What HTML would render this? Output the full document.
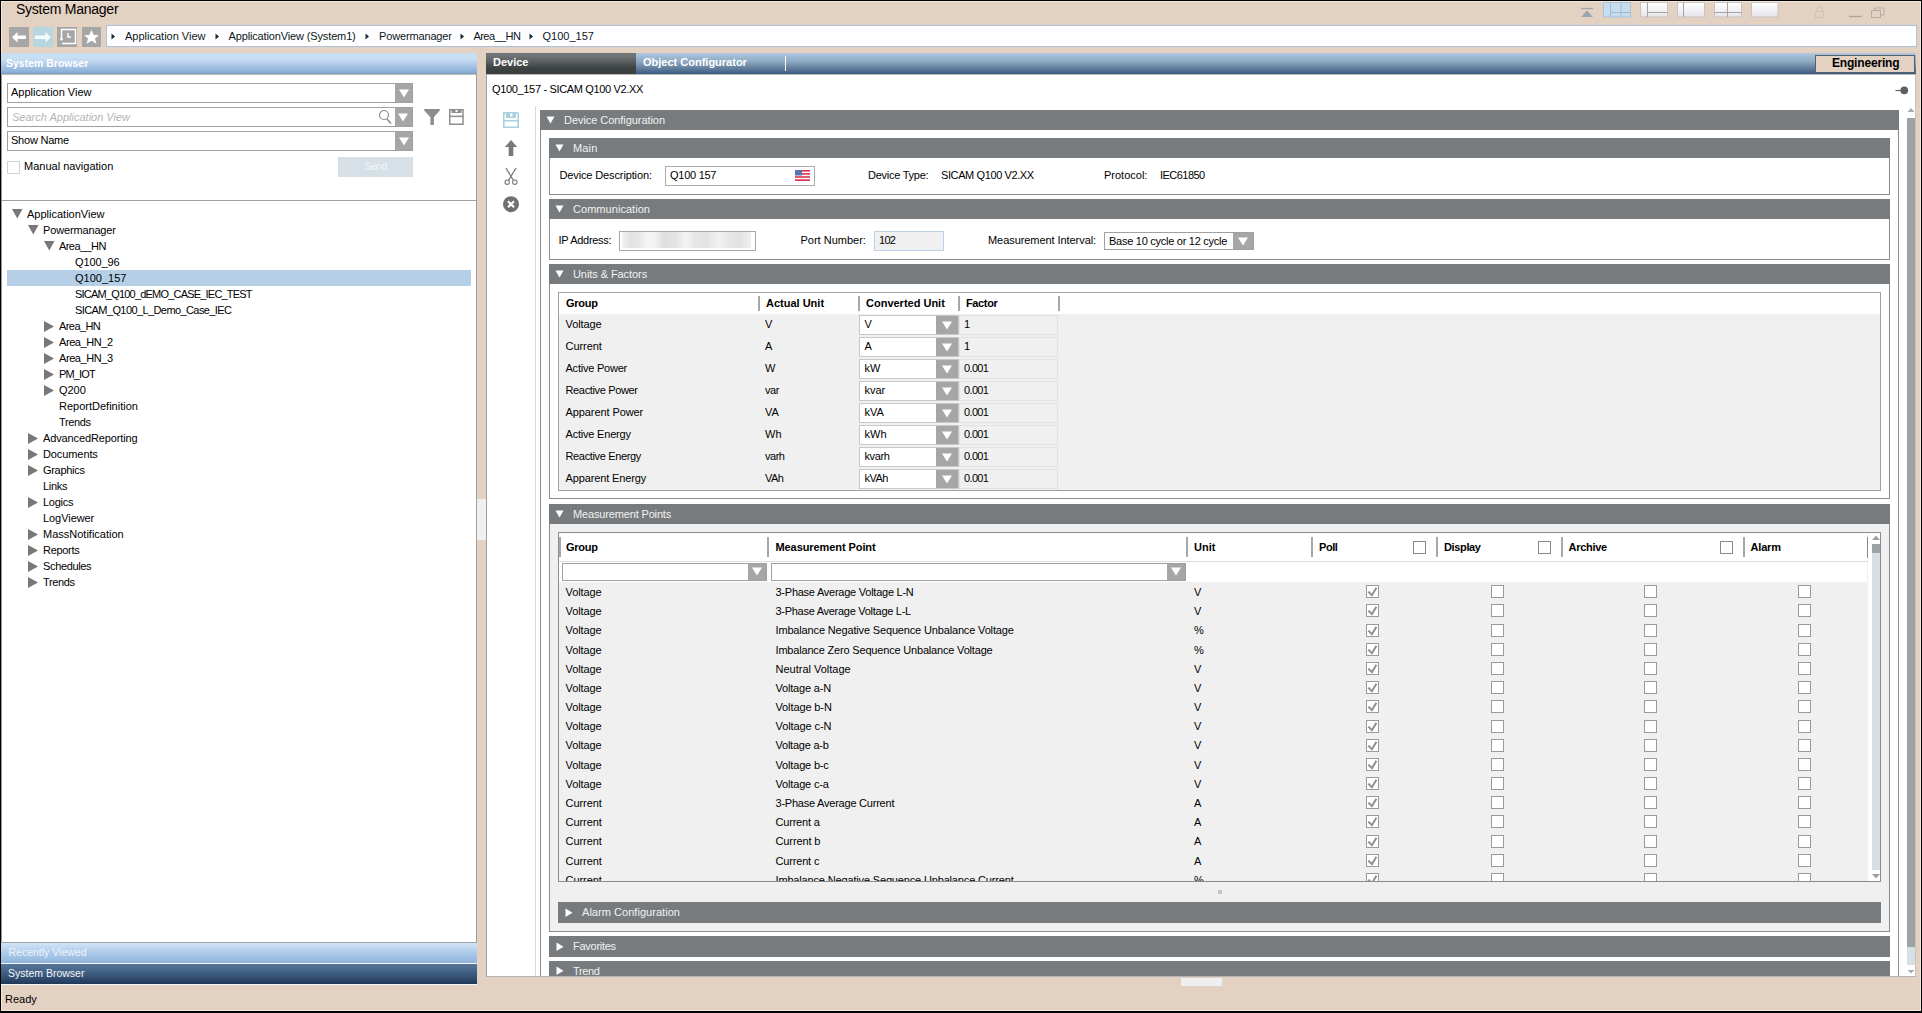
<!DOCTYPE html>
<html><head><meta charset="utf-8"><style>
html,body{margin:0;padding:0;width:1922px;height:1013px;overflow:hidden;background:#000}
body{position:relative;font-family:"Liberation Sans",sans-serif}
div{position:absolute}
.t{white-space:nowrap;line-height:20px}
</style></head><body>
<div style="left:0px;top:0px;width:1922px;height:1013px;background:#000"></div>
<div style="left:1px;top:1px;width:1920px;height:1010px;background:#f3e7db"></div>
<div style="left:2px;top:2px;width:1918px;height:1008px;background:#e3d1c1"></div>
<div class="t" style="left:16px;top:-1px;font-size:14px;letter-spacing:-0.252px;color:#000">System Manager</div>
<svg style="position:absolute;left:1578px;top:0px" width="320" height="22">
<defs><linearGradient id="wg" x1="0" y1="0" x2="0" y2="1"><stop offset="0" stop-color="#ffffff"/><stop offset="1" stop-color="#e6e4e8"/></linearGradient></defs>
<g fill="none">
<path d="M3 8.5h12" stroke="#9aa6ae" stroke-width="1.3"/>
<path d="M3 17 L9 10.5 L15 17 Z" fill="#9aa6ae"/>
<rect x="25.5" y="2.5" width="27" height="14.5" fill="#c6ddf0" stroke="#abc4da"/>
<path d="M32.5 2.5v14.5M43 2.5v14.5M32.5 12.5h20" stroke="#a2b9ce"/>
<rect x="62.5" y="2.5" width="27" height="14.5" fill="url(#wg)" stroke="#c9c3c3"/>
<path d="M69.5 2.5v14.5M69.5 12.5h20" stroke="#a9a3a3"/>
<rect x="99.5" y="2.5" width="27" height="14.5" fill="url(#wg)" stroke="#c9c3c3"/>
<path d="M105.5 2.5v14.5" stroke="#a9a3a3"/>
<rect x="136.5" y="2.5" width="27" height="14.5" fill="url(#wg)" stroke="#c9c3c3"/>
<path d="M149.5 2.5v14.5M136.5 12.5h27" stroke="#a9a3a3"/>
<rect x="173.5" y="2.5" width="26.5" height="14.5" fill="url(#wg)" stroke="#c9c3c3"/>
<rect x="237.5" y="11.5" width="8" height="6" fill="none" stroke="#d2c2b5"/>
<path d="M239 11.5v-2.5a2.5 2.5 0 0 1 5 0v2.5" stroke="#d2c2b5"/>
<path d="M271 16.5h13" stroke="#aba5a2" stroke-width="1.3"/>
<rect x="293.5" y="10.5" width="9" height="7" stroke="#b5aca7"/>
<path d="M296.5 10.5v-2.5h9.5v7h-3" stroke="#b5aca7"/>
</g></svg>
<div style="left:9px;top:27px;width:20px;height:20px;background:#a6a6a6"></div>
<div style="left:33px;top:27px;width:20px;height:20px;background:#b7d6e0"></div>
<div style="left:57px;top:27px;width:20px;height:20px;background:#a6a6a6"></div>
<div style="left:82px;top:27px;width:19px;height:20px;background:#a6a6a6"></div>
<svg style="position:absolute;left:9px;top:27px" width="100" height="20">
<path d="M3 10.3 L8.5 5 V8.6 H17 V12 H8.5 V15.6 Z" fill="#fff"/>
<path d="M42 10.3 L36.5 5 V8.6 H26 V12 H36.5 V15.6 Z" fill="#f4fbfd"/>
<path d="M52.5 13 V2.5 H66.5 V16.5 H53" fill="none" stroke="#fff" stroke-width="1.5"/>
<path d="M50.5 11.5 L52.5 14 L54.5 11.5" fill="#fff"/>
<path d="M59 6 V10 H62" fill="none" stroke="#fff" stroke-width="1.5"/>
<path d="M82.5 3 L84.8 8 L90 8.3 L86 11.6 L87.4 16.8 L82.5 13.8 L77.6 16.8 L79 11.6 L75 8.3 L80.2 8 Z" fill="#fff"/>
</svg>
<div style="left:106px;top:25px;width:1811px;height:22px;background:#fff;border:1px solid #a8c3df;box-sizing:border-box"></div>
<svg style="position:absolute;left:111px;top:33px" width="5" height="7"><path d="M0.5 0.5 L4 3.5 L0.5 6.5Z" fill="#1a2a3a"/></svg>
<svg style="position:absolute;left:215px;top:33px" width="5" height="7"><path d="M0.5 0.5 L4 3.5 L0.5 6.5Z" fill="#1a2a3a"/></svg>
<svg style="position:absolute;left:365px;top:33px" width="5" height="7"><path d="M0.5 0.5 L4 3.5 L0.5 6.5Z" fill="#1a2a3a"/></svg>
<svg style="position:absolute;left:460px;top:33px" width="5" height="7"><path d="M0.5 0.5 L4 3.5 L0.5 6.5Z" fill="#1a2a3a"/></svg>
<svg style="position:absolute;left:529px;top:33px" width="5" height="7"><path d="M0.5 0.5 L4 3.5 L0.5 6.5Z" fill="#1a2a3a"/></svg>
<div class="t" style="left:125px;top:26px;font-size:11px;color:#0c1622">Application View</div>
<div class="t" style="left:228.5px;top:26px;font-size:11px;letter-spacing:-0.140px;color:#0c1622">ApplicationView (System1)</div>
<div class="t" style="left:379px;top:26px;font-size:11px;letter-spacing:-0.148px;color:#0c1622">Powermanager</div>
<div class="t" style="left:473.5px;top:26px;font-size:11px;letter-spacing:-0.568px;color:#0c1622">Area__HN</div>
<div class="t" style="left:542.5px;top:26px;font-size:11px;color:#0c1622">Q100_157</div>
<div style="left:1px;top:53px;width:476px;height:890px;background:#fff"></div>
<div style="left:476px;top:74px;width:1px;height:869px;background:#a0a0a0"></div>
<div style="left:1px;top:75px;width:1px;height:867px;background:#999"></div>
<div style="left:477px;top:499px;width:9px;height:41px;background:#f0f0f0"></div>
<div style="left:1px;top:942px;width:476px;height:1px;background:#a0a0a0"></div>
<div style="left:1px;top:53px;width:476px;height:21px;background:linear-gradient(#c9dcee,#c7e0f4 15%,#c7dbf2 30%,#a9c7e6 60%,#8db2d9 88%,#7f9ec2)"></div>
<div style="left:1px;top:74px;width:475px;height:1px;background:#b9b9b9"></div>
<div class="t" style="left:6px;top:53px;font-size:10.5px;color:#fff;font-weight:bold">System Browser</div>
<div style="left:7px;top:83px;width:406px;height:20px;background:#fff;border:1px solid #a0a0a0;box-sizing:border-box"></div>
<div style="left:395px;top:84px;width:17px;height:18px;background:#a6a6a6"></div>
<svg style="position:absolute;left:397.5px;top:88.0px" width="12" height="10"><path d="M1 1.5 H11 L6 9.5Z" fill="#fff"/></svg>
<div class="t" style="left:11px;top:82px;font-size:11px;color:#000">Application View</div>
<div style="left:7px;top:107px;width:406px;height:20px;background:#fff;border:1px solid #a0a0a0;box-sizing:border-box"></div>
<div style="left:395px;top:108px;width:17px;height:18px;background:#a6a6a6"></div>
<svg style="position:absolute;left:397px;top:112px" width="12" height="10"><path d="M1 1.5 H11 L6 9.5Z" fill="#fff"/></svg>
<div class="t" style="left:12px;top:107px;font-size:11px;color:#b4b4b4;font-style:italic">Search Application View</div>
<svg style="position:absolute;left:377px;top:109px" width="16" height="16"><circle cx="7" cy="6" r="4.5" fill="none" stroke="#8a8a8a" stroke-width="1.2"/><path d="M9.8 9.8 L14 14.5" stroke="#8a8a8a" stroke-width="1.5"/></svg>
<svg style="position:absolute;left:424px;top:109px" width="44" height="17">
<path d="M0.2 0 H15.8 V1.6 L9.9 8.2 V16 H6.4 V8.2 L0.2 1.6 Z" fill="#8e8e8e"/>
<path d="M25.75 0.75 H39 V15.25 H25.75 Z" fill="none" stroke="#8e8e8e" stroke-width="1.5"/>
<rect x="27.5" y="0.5" width="10" height="3.5" fill="#8e8e8e"/>
<rect x="31.5" y="1" width="2" height="2" fill="#fff"/>
<rect x="25.5" y="6.6" width="14" height="1.5" fill="#8e8e8e"/>
</svg>
<div style="left:7px;top:131px;width:406px;height:20px;background:#fff;border:1px solid #a0a0a0;box-sizing:border-box"></div>
<div style="left:395px;top:132px;width:17px;height:18px;background:#a6a6a6"></div>
<svg style="position:absolute;left:397.5px;top:136.0px" width="12" height="10"><path d="M1 1.5 H11 L6 9.5Z" fill="#fff"/></svg>
<div class="t" style="left:11px;top:130px;font-size:11px;letter-spacing:-0.217px;color:#000">Show Name</div>
<div style="left:7px;top:161px;width:13px;height:13px;background:#fff;border:1px solid #d0d0d0;box-sizing:border-box"></div>
<div class="t" style="left:24px;top:156px;font-size:11px;color:#000">Manual navigation</div>
<div style="left:338px;top:157px;width:75px;height:20px;background:#d6e0e6"></div>
<div class="t" style="left:364px;top:156px;font-size:11px;letter-spacing:-0.673px;color:#f2f6f8">Send</div>
<div style="left:1px;top:200px;width:475px;height:1px;background:#a0a0a0"></div>
<div style="left:7px;top:270px;width:464px;height:16px;background:#b4cfe6"></div>
<svg style="position:absolute;left:11.5px;top:209.2px" width="11" height="10"><path d="M0 0 H10.5 L5.25 9.5Z" fill="#787878"/></svg>
<div class="t" style="left:27px;top:204px;font-size:11px;color:#000">ApplicationView</div>
<svg style="position:absolute;left:27.5px;top:225.2px" width="11" height="10"><path d="M0 0 H10.5 L5.25 9.5Z" fill="#787878"/></svg>
<div class="t" style="left:43px;top:220px;font-size:11px;letter-spacing:-0.148px;color:#000">Powermanager</div>
<svg style="position:absolute;left:43.5px;top:241.2px" width="11" height="10"><path d="M0 0 H10.5 L5.25 9.5Z" fill="#787878"/></svg>
<div class="t" style="left:59px;top:236px;font-size:11px;letter-spacing:-0.568px;color:#000">Area__HN</div>
<div class="t" style="left:75px;top:252px;font-size:11px;letter-spacing:-0.119px;color:#000">Q100_96</div>
<div class="t" style="left:75px;top:268px;font-size:11px;color:#000">Q100_157</div>
<div class="t" style="left:75px;top:284px;font-size:11px;letter-spacing:-0.798px;color:#000">SICAM_Q100_dEMO_CASE_IEC_TEST</div>
<div class="t" style="left:75px;top:300px;font-size:11px;letter-spacing:-0.592px;color:#000">SICAM_Q100_L_Demo_Case_IEC</div>
<svg style="position:absolute;left:44px;top:321px" width="10" height="11"><path d="M0 0 V11 L10 5.5Z" fill="#787878"/></svg>
<div class="t" style="left:59px;top:316px;font-size:11px;letter-spacing:-0.575px;color:#000">Area_HN</div>
<svg style="position:absolute;left:44px;top:337px" width="10" height="11"><path d="M0 0 V11 L10 5.5Z" fill="#787878"/></svg>
<div class="t" style="left:59px;top:332px;font-size:11px;letter-spacing:-0.425px;color:#000">Area_HN_2</div>
<svg style="position:absolute;left:44px;top:353px" width="10" height="11"><path d="M0 0 V11 L10 5.5Z" fill="#787878"/></svg>
<div class="t" style="left:59px;top:348px;font-size:11px;letter-spacing:-0.425px;color:#000">Area_HN_3</div>
<svg style="position:absolute;left:44px;top:369px" width="10" height="11"><path d="M0 0 V11 L10 5.5Z" fill="#787878"/></svg>
<div class="t" style="left:59px;top:364px;font-size:11px;letter-spacing:-0.854px;color:#000">PM_IOT</div>
<svg style="position:absolute;left:44px;top:385px" width="10" height="11"><path d="M0 0 V11 L10 5.5Z" fill="#787878"/></svg>
<div class="t" style="left:59px;top:380px;font-size:11px;letter-spacing:-0.046px;color:#000">Q200</div>
<div class="t" style="left:59px;top:396px;font-size:11px;color:#000">ReportDefinition</div>
<div class="t" style="left:59px;top:412px;font-size:11px;letter-spacing:-0.369px;color:#000">Trends</div>
<svg style="position:absolute;left:28px;top:433px" width="10" height="11"><path d="M0 0 V11 L10 5.5Z" fill="#787878"/></svg>
<div class="t" style="left:43px;top:428px;font-size:11px;letter-spacing:-0.118px;color:#000">AdvancedReporting</div>
<svg style="position:absolute;left:28px;top:449px" width="10" height="11"><path d="M0 0 V11 L10 5.5Z" fill="#787878"/></svg>
<div class="t" style="left:43px;top:444px;font-size:11px;letter-spacing:-0.095px;color:#000">Documents</div>
<svg style="position:absolute;left:28px;top:465px" width="10" height="11"><path d="M0 0 V11 L10 5.5Z" fill="#787878"/></svg>
<div class="t" style="left:43px;top:460px;font-size:11px;letter-spacing:-0.304px;color:#000">Graphics</div>
<div class="t" style="left:43px;top:476px;font-size:11px;letter-spacing:-0.297px;color:#000">Links</div>
<svg style="position:absolute;left:28px;top:497px" width="10" height="11"><path d="M0 0 V11 L10 5.5Z" fill="#787878"/></svg>
<div class="t" style="left:43px;top:492px;font-size:11px;letter-spacing:-0.283px;color:#000">Logics</div>
<div class="t" style="left:43px;top:508px;font-size:11px;letter-spacing:-0.062px;color:#000">LogViewer</div>
<svg style="position:absolute;left:28px;top:529px" width="10" height="11"><path d="M0 0 V11 L10 5.5Z" fill="#787878"/></svg>
<div class="t" style="left:43px;top:524px;font-size:11px;color:#000">MassNotification</div>
<svg style="position:absolute;left:28px;top:545px" width="10" height="11"><path d="M0 0 V11 L10 5.5Z" fill="#787878"/></svg>
<div class="t" style="left:43px;top:540px;font-size:11px;letter-spacing:-0.305px;color:#000">Reports</div>
<svg style="position:absolute;left:28px;top:561px" width="10" height="11"><path d="M0 0 V11 L10 5.5Z" fill="#787878"/></svg>
<div class="t" style="left:43px;top:556px;font-size:11px;letter-spacing:-0.351px;color:#000">Schedules</div>
<svg style="position:absolute;left:28px;top:577px" width="10" height="11"><path d="M0 0 V11 L10 5.5Z" fill="#787878"/></svg>
<div class="t" style="left:43px;top:572px;font-size:11px;letter-spacing:-0.369px;color:#000">Trends</div>
<div style="left:1px;top:943px;width:476px;height:20px;background:linear-gradient(#d2e4f6,#a9c8e8 55%,#8fb5dc)"></div>
<div class="t" style="left:8.5px;top:942px;font-size:10.5px;color:#eef4fa">Recently Viewed</div>
<div style="left:1px;top:963px;width:476px;height:22px;background:#f4f6f8"></div>
<div style="left:1px;top:964px;width:476px;height:20px;background:linear-gradient(#59779c,#3e5b80 50%,#203858)"></div>
<div class="t" style="left:8px;top:963px;font-size:10.5px;color:#f4f6f8">System Browser</div>
<div class="t" style="left:5px;top:989px;font-size:11px;color:#000">Ready</div>
<div style="left:486px;top:53px;width:1430px;height:924px;background:#fff;border-left:1px solid #a0a0a0;border-right:1px solid #c4c4c4;border-bottom:1px solid #b4b4b4;box-sizing:border-box"></div>
<div style="left:486px;top:53px;width:1430px;height:21px;background:linear-gradient(#b2c5de,#a3c0d6 12%,#8ea9c3 40%,#66829f 70%,#3b5b85)"></div>
<div style="left:487px;top:74px;width:1428px;height:1px;background:#b9b9b9"></div>
<div style="left:486px;top:53px;width:150px;height:21px;background:linear-gradient(#687074,#747676 10%,#5a6062 40%,#3c4141 72%,#393e3e)"></div>
<div class="t" style="left:493px;top:52px;font-size:11px;color:#fff;font-weight:bold">Device</div>
<div class="t" style="left:643px;top:52px;font-size:11px;color:#fff;font-weight:bold">Object Configurator</div>
<div style="left:785px;top:56px;width:1px;height:15px;background:#fff"></div>
<div style="left:1815px;top:55px;width:100px;height:18px;background:#e3d1c1;border:1px solid #55606c;box-sizing:border-box;box-shadow:0 1px 0 #3f5f8a"></div>
<div class="t" style="left:1832px;top:53px;font-size:12px;letter-spacing:-0.181px;color:#000;font-weight:bold">Engineering</div>
<div class="t" style="left:492px;top:79px;font-size:11px;letter-spacing:-0.340px;color:#000">Q100_157 - SICAM Q100 V2.XX</div>
<svg style="position:absolute;left:1893px;top:85px" width="16" height="11"><path d="M2.5 5.5 H8" stroke="#5f5f5f" stroke-width="1.2"/><circle cx="11.3" cy="5.4" r="3.8" fill="#5f5f5f"/></svg>
<div style="left:535px;top:106px;width:1px;height:870px;background:#d8d8d8"></div>
<svg style="position:absolute;left:503px;top:112px" width="17" height="101">
<path d="M0.8 0.8 H14.5 L15.2 1.5 V15.2 H0.8 Z" fill="none" stroke="#a8d0dd" stroke-width="1.6"/>
<rect x="3" y="0.5" width="10" height="5.5" fill="#a8d0dd"/>
<rect x="7" y="1.5" width="2.5" height="3" fill="#fff"/>
<rect x="1" y="8" width="14" height="1.5" fill="#a8d0dd"/>
<path d="M8 28 L14.2 35 H10.3 V44 H5.7 V35 H1.8 Z" fill="#787878"/>
<path d="M3 56 L10.5 68.5 M13 56 L5.5 68.5" stroke="#7a7a7a" stroke-width="1.3"/>
<circle cx="4.2" cy="70.2" r="2.2" fill="none" stroke="#7a7a7a" stroke-width="1.1"/>
<circle cx="11.8" cy="70.2" r="2.2" fill="none" stroke="#7a7a7a" stroke-width="1.1"/>
<circle cx="8" cy="92.2" r="8" fill="#707070"/>
<path d="M5 89.2 L11 95.2 M11 89.2 L5 95.2" stroke="#fff" stroke-width="2.2"/>
</svg>
<div style="left:540px;top:110px;width:1px;height:866px;background:#8c8c8c"></div>
<div style="left:1898px;top:110px;width:1px;height:866px;background:#8c8c8c"></div>
<svg style="position:absolute;left:1906px;top:104px" width="10" height="9"><path d="M1.5 8 L5 4 L8.5 8Z" fill="#a9a9a9"/></svg>
<div style="left:1907px;top:118px;width:8px;height:829px;background:#9ea3a6"></div>
<div style="left:1907px;top:947px;width:8px;height:18px;background:#d6dfe3"></div>
<svg style="position:absolute;left:1906px;top:969px" width="10" height="8"><path d="M1.5 1 L5 4.6 L8.5 1Z" fill="#a9a9a9"/></svg>
<div style="left:540px;top:110px;width:1359px;height:20px;background:#777b7e"></div>
<svg style="position:absolute;left:546px;top:116.0px" width="10" height="9"><path d="M0.5 0.5 H8.5 L4.5 7.5Z" fill="#fff"/></svg>
<div class="t" style="left:564px;top:110px;font-size:11px;letter-spacing:-0.056px;color:#f2f2f2">Device Configuration</div>
<div style="left:549px;top:138px;width:1341px;height:57px;background:#fff;border:1px solid #8c8c8c;box-sizing:border-box"></div>
<div style="left:549px;top:138px;width:1341px;height:20px;background:#777b7e"></div>
<svg style="position:absolute;left:555px;top:144.0px" width="10" height="9"><path d="M0.5 0.5 H8.5 L4.5 7.5Z" fill="#fff"/></svg>
<div class="t" style="left:573px;top:138px;font-size:11px;letter-spacing:0.152px;color:#f2f2f2">Main</div>
<div class="t" style="left:559.5px;top:165px;font-size:11px;letter-spacing:-0.127px;color:#000">Device Description:</div>
<div style="left:665px;top:166px;width:150px;height:20px;background:#fff;border:1px solid #ababab;box-sizing:border-box"></div>
<div class="t" style="left:670px;top:165px;font-size:11px;letter-spacing:-0.268px;color:#000">Q100 157</div>
<svg style="position:absolute;left:795px;top:170px" width="15" height="11">
<rect x="0" y="0" width="15" height="11" fill="#fff"/>
<rect x="0" y="0" width="15" height="1.6" fill="#d9344a"/><rect x="0" y="3.1" width="15" height="1.6" fill="#d9344a"/>
<rect x="0" y="6.2" width="15" height="1.6" fill="#d9344a"/><rect x="0" y="9.3" width="15" height="1.7" fill="#d9344a"/>
<rect x="0" y="0" width="7" height="5.5" fill="#5b6fb3"/></svg>
<div class="t" style="left:868px;top:165px;font-size:11px;letter-spacing:-0.255px;color:#000">Device Type:</div>
<div class="t" style="left:941px;top:165px;font-size:11px;letter-spacing:-0.395px;color:#000">SICAM Q100 V2.XX</div>
<div class="t" style="left:1104px;top:165px;font-size:11px;color:#000">Protocol:</div>
<div class="t" style="left:1160px;top:165px;font-size:11px;letter-spacing:-0.538px;color:#000">IEC61850</div>
<div style="left:549px;top:199px;width:1341px;height:61px;background:#fff;border:1px solid #8c8c8c;box-sizing:border-box"></div>
<div style="left:549px;top:199px;width:1341px;height:20px;background:#777b7e"></div>
<svg style="position:absolute;left:555px;top:205.0px" width="10" height="9"><path d="M0.5 0.5 H8.5 L4.5 7.5Z" fill="#fff"/></svg>
<div class="t" style="left:573px;top:199px;font-size:11px;letter-spacing:0.047px;color:#f2f2f2">Communication</div>
<div class="t" style="left:558.5px;top:230px;font-size:11px;letter-spacing:-0.299px;color:#000">IP Address:</div>
<div style="left:619px;top:231px;width:137px;height:20px;background:#fff;border:1px solid #a8a8a8;box-sizing:border-box"></div>
<div style="left:622px;top:232px;width:129px;height:16px;background:linear-gradient(90deg,#f2f2f2 0.0%,#e3e3e3 6.2%,#e5e5e5 11.6%,#f6f6f6 20.9%,#f2f2f2 25.6%,#dfdfdf 32.6%,#e5e5e5 42.6%,#f4f4f4 49.6%,#e7e7e7 55.8%,#e3e3e3 65.9%,#f3f3f3 75.2%,#e5e5e5 83.7%,#e3e3e3 91.5%,#efefef 100.0%)"></div>
<div class="t" style="left:800.5px;top:230px;font-size:11px;color:#000">Port Number:</div>
<div style="left:874px;top:231px;width:70px;height:20px;background:#f0f0f0;border:1px solid #b9d1e6;box-sizing:border-box"></div>
<div class="t" style="left:879px;top:230px;font-size:11px;letter-spacing:-0.688px;color:#000">102</div>
<div class="t" style="left:988px;top:230px;font-size:11px;letter-spacing:-0.065px;color:#000">Measurement Interval:</div>
<div style="left:1104px;top:232px;width:150px;height:18px;background:#fff;border:1px solid #a0a0a0;box-sizing:border-box"></div>
<div style="left:1233px;top:233px;width:20px;height:16px;background:#a6a6a6"></div>
<svg style="position:absolute;left:1237px;top:236px" width="12" height="10"><path d="M1 1.5 H11 L6 9.5Z" fill="#fff"/></svg>
<div class="t" style="left:1109px;top:231px;font-size:11px;letter-spacing:-0.267px;color:#000">Base 10 cycle or 12 cycle</div>
<div style="left:549px;top:264px;width:1341px;height:235px;background:#fff;border:1px solid #8c8c8c;box-sizing:border-box"></div>
<div style="left:549px;top:264px;width:1341px;height:20px;background:#777b7e"></div>
<svg style="position:absolute;left:555px;top:270.0px" width="10" height="9"><path d="M0.5 0.5 H8.5 L4.5 7.5Z" fill="#fff"/></svg>
<div class="t" style="left:573px;top:264px;font-size:11px;letter-spacing:-0.073px;color:#f2f2f2">Units &amp; Factors</div>
<div style="left:558px;top:292px;width:1323px;height:199px;background:#f0f0f0;border:1px solid #a0a0a0;box-sizing:border-box"></div>
<div style="left:559px;top:293px;width:1321px;height:21px;background:#fff"></div>
<div style="left:758px;top:296px;width:2px;height:15px;background:#a8a8a8"></div>
<div style="left:858px;top:296px;width:2px;height:15px;background:#a8a8a8"></div>
<div style="left:958px;top:296px;width:2px;height:15px;background:#a8a8a8"></div>
<div style="left:1058px;top:296px;width:2px;height:15px;background:#a8a8a8"></div>
<div class="t" style="left:566px;top:293px;font-size:11px;letter-spacing:-0.250px;color:#000;font-weight:bold">Group</div>
<div class="t" style="left:766px;top:293px;font-size:11px;color:#000;font-weight:bold">Actual Unit</div>
<div class="t" style="left:866px;top:293px;font-size:11px;color:#000;font-weight:bold">Converted Unit</div>
<div class="t" style="left:966px;top:293px;font-size:11px;letter-spacing:-0.365px;color:#000;font-weight:bold">Factor</div>
<div class="t" style="left:565.5px;top:314px;font-size:11px;letter-spacing:-0.089px;color:#000">Voltage</div>
<div class="t" style="left:765px;top:314px;font-size:11px;color:#000">V</div>
<div style="left:859px;top:315px;width:100px;height:20px;background:#fff;border:1px solid #c8c8c8;box-sizing:border-box"></div>
<div style="left:936px;top:316px;width:22px;height:18px;background:#a6a6a6"></div>
<svg style="position:absolute;left:941px;top:320px" width="12" height="10"><path d="M1 1.5 H11 L6 9.5Z" fill="#fff"/></svg>
<div class="t" style="left:864.5px;top:314px;font-size:11px;color:#000">V</div>
<div style="left:959px;top:315px;width:99px;height:20px;border:1px solid #e2e2e2;box-sizing:border-box"></div>
<div class="t" style="left:964px;top:314px;font-size:11px;color:#000">1</div>
<div class="t" style="left:565.5px;top:336px;font-size:11px;letter-spacing:-0.048px;color:#000">Current</div>
<div class="t" style="left:765px;top:336px;font-size:11px;color:#000">A</div>
<div style="left:859px;top:337px;width:100px;height:20px;background:#fff;border:1px solid #c8c8c8;box-sizing:border-box"></div>
<div style="left:936px;top:338px;width:22px;height:18px;background:#a6a6a6"></div>
<svg style="position:absolute;left:941px;top:342px" width="12" height="10"><path d="M1 1.5 H11 L6 9.5Z" fill="#fff"/></svg>
<div class="t" style="left:864.5px;top:336px;font-size:11px;color:#000">A</div>
<div style="left:959px;top:337px;width:99px;height:20px;border:1px solid #e2e2e2;box-sizing:border-box"></div>
<div class="t" style="left:964px;top:336px;font-size:11px;color:#000">1</div>
<div class="t" style="left:565.5px;top:358px;font-size:11px;letter-spacing:-0.220px;color:#000">Active Power</div>
<div class="t" style="left:765px;top:358px;font-size:11px;color:#000">W</div>
<div style="left:859px;top:359px;width:100px;height:20px;background:#fff;border:1px solid #c8c8c8;box-sizing:border-box"></div>
<div style="left:936px;top:360px;width:22px;height:18px;background:#a6a6a6"></div>
<svg style="position:absolute;left:941px;top:364px" width="12" height="10"><path d="M1 1.5 H11 L6 9.5Z" fill="#fff"/></svg>
<div class="t" style="left:864.5px;top:358px;font-size:11px;color:#000">kW</div>
<div style="left:959px;top:359px;width:99px;height:20px;border:1px solid #e2e2e2;box-sizing:border-box"></div>
<div class="t" style="left:964px;top:358px;font-size:11px;letter-spacing:-0.641px;color:#000">0.001</div>
<div class="t" style="left:565.5px;top:380px;font-size:11px;letter-spacing:-0.351px;color:#000">Reactive Power</div>
<div class="t" style="left:765px;top:380px;font-size:11px;letter-spacing:-0.491px;color:#000">var</div>
<div style="left:859px;top:381px;width:100px;height:20px;background:#fff;border:1px solid #c8c8c8;box-sizing:border-box"></div>
<div style="left:936px;top:382px;width:22px;height:18px;background:#a6a6a6"></div>
<svg style="position:absolute;left:941px;top:386px" width="12" height="10"><path d="M1 1.5 H11 L6 9.5Z" fill="#fff"/></svg>
<div class="t" style="left:864.5px;top:380px;font-size:11px;color:#000">kvar</div>
<div style="left:959px;top:381px;width:99px;height:20px;border:1px solid #e2e2e2;box-sizing:border-box"></div>
<div class="t" style="left:964px;top:380px;font-size:11px;letter-spacing:-0.641px;color:#000">0.001</div>
<div class="t" style="left:565.5px;top:402px;font-size:11px;letter-spacing:-0.088px;color:#000">Apparent Power</div>
<div class="t" style="left:765px;top:402px;font-size:11px;color:#000">VA</div>
<div style="left:859px;top:403px;width:100px;height:20px;background:#fff;border:1px solid #c8c8c8;box-sizing:border-box"></div>
<div style="left:936px;top:404px;width:22px;height:18px;background:#a6a6a6"></div>
<svg style="position:absolute;left:941px;top:408px" width="12" height="10"><path d="M1 1.5 H11 L6 9.5Z" fill="#fff"/></svg>
<div class="t" style="left:864.5px;top:402px;font-size:11px;color:#000">kVA</div>
<div style="left:959px;top:403px;width:99px;height:20px;border:1px solid #e2e2e2;box-sizing:border-box"></div>
<div class="t" style="left:964px;top:402px;font-size:11px;letter-spacing:-0.641px;color:#000">0.001</div>
<div class="t" style="left:565.5px;top:424px;font-size:11px;letter-spacing:-0.201px;color:#000">Active Energy</div>
<div class="t" style="left:765px;top:424px;font-size:11px;color:#000">Wh</div>
<div style="left:859px;top:425px;width:100px;height:20px;background:#fff;border:1px solid #c8c8c8;box-sizing:border-box"></div>
<div style="left:936px;top:426px;width:22px;height:18px;background:#a6a6a6"></div>
<svg style="position:absolute;left:941px;top:430px" width="12" height="10"><path d="M1 1.5 H11 L6 9.5Z" fill="#fff"/></svg>
<div class="t" style="left:864.5px;top:424px;font-size:11px;color:#000">kWh</div>
<div style="left:959px;top:425px;width:99px;height:20px;border:1px solid #e2e2e2;box-sizing:border-box"></div>
<div class="t" style="left:964px;top:424px;font-size:11px;letter-spacing:-0.641px;color:#000">0.001</div>
<div class="t" style="left:565.5px;top:446px;font-size:11px;letter-spacing:-0.346px;color:#000">Reactive Energy</div>
<div class="t" style="left:765px;top:446px;font-size:11px;letter-spacing:-0.469px;color:#000">varh</div>
<div style="left:859px;top:447px;width:100px;height:20px;background:#fff;border:1px solid #c8c8c8;box-sizing:border-box"></div>
<div style="left:936px;top:448px;width:22px;height:18px;background:#a6a6a6"></div>
<svg style="position:absolute;left:941px;top:452px" width="12" height="10"><path d="M1 1.5 H11 L6 9.5Z" fill="#fff"/></svg>
<div class="t" style="left:864.5px;top:446px;font-size:11px;letter-spacing:-0.402px;color:#000">kvarh</div>
<div style="left:959px;top:447px;width:99px;height:20px;border:1px solid #e2e2e2;box-sizing:border-box"></div>
<div class="t" style="left:964px;top:446px;font-size:11px;letter-spacing:-0.641px;color:#000">0.001</div>
<div class="t" style="left:565.5px;top:468px;font-size:11px;letter-spacing:-0.123px;color:#000">Apparent Energy</div>
<div class="t" style="left:765px;top:468px;font-size:11px;letter-spacing:-0.500px;color:#000">VAh</div>
<div style="left:859px;top:469px;width:100px;height:20px;background:#fff;border:1px solid #c8c8c8;box-sizing:border-box"></div>
<div style="left:936px;top:470px;width:22px;height:18px;background:#a6a6a6"></div>
<svg style="position:absolute;left:941px;top:474px" width="12" height="10"><path d="M1 1.5 H11 L6 9.5Z" fill="#fff"/></svg>
<div class="t" style="left:864.5px;top:468px;font-size:11px;letter-spacing:-0.533px;color:#000">kVAh</div>
<div style="left:959px;top:469px;width:99px;height:20px;border:1px solid #e2e2e2;box-sizing:border-box"></div>
<div class="t" style="left:964px;top:468px;font-size:11px;letter-spacing:-0.641px;color:#000">0.001</div>
<div style="left:549px;top:504px;width:1341px;height:428px;background:#f0f0f0;border:1px solid #8c8c8c;box-sizing:border-box"></div>
<div style="left:549px;top:504px;width:1341px;height:20px;background:#777b7e"></div>
<svg style="position:absolute;left:555px;top:510.0px" width="10" height="9"><path d="M0.5 0.5 H8.5 L4.5 7.5Z" fill="#fff"/></svg>
<div class="t" style="left:573px;top:504px;font-size:11px;letter-spacing:-0.155px;color:#f2f2f2">Measurement Points</div>
<div style="left:558px;top:532px;width:1323px;height:350px;background:#f0f0f0;border:1px solid #8c8c8c;box-sizing:border-box"></div>
<div style="left:559px;top:533px;width:1308px;height:28px;background:#fff"></div>
<div style="left:559px;top:561px;width:1309px;height:1px;background:#dedede"></div>
<div style="left:559px;top:562px;width:1308px;height:20px;background:#fff"></div>
<div style="left:1868px;top:533px;width:12px;height:348px;background:#fff"></div>
<div style="left:559px;top:537px;width:2px;height:20px;background:#a8a8a8"></div>
<div style="left:767px;top:537px;width:2px;height:20px;background:#a8a8a8"></div>
<div style="left:1186px;top:537px;width:2px;height:20px;background:#a8a8a8"></div>
<div style="left:1311px;top:537px;width:2px;height:20px;background:#a8a8a8"></div>
<div style="left:1436px;top:537px;width:2px;height:20px;background:#a8a8a8"></div>
<div style="left:1561px;top:537px;width:2px;height:20px;background:#a8a8a8"></div>
<div style="left:1743px;top:537px;width:2px;height:20px;background:#a8a8a8"></div>
<div style="left:1867px;top:537px;width:1px;height:21px;background:#8a8a8a"></div>
<div class="t" style="left:566px;top:537px;font-size:11px;letter-spacing:-0.250px;color:#000;font-weight:bold">Group</div>
<div class="t" style="left:775.5px;top:537px;font-size:11px;letter-spacing:-0.081px;color:#000;font-weight:bold">Measurement Point</div>
<div class="t" style="left:1194px;top:537px;font-size:11px;letter-spacing:0.042px;color:#000;font-weight:bold">Unit</div>
<div class="t" style="left:1319px;top:537px;font-size:11px;letter-spacing:-0.429px;color:#000;font-weight:bold">Poll</div>
<div class="t" style="left:1444px;top:537px;font-size:11px;letter-spacing:-0.359px;color:#000;font-weight:bold">Display</div>
<div class="t" style="left:1568.5px;top:537px;font-size:11px;letter-spacing:-0.296px;color:#000;font-weight:bold">Archive</div>
<div class="t" style="left:1750.5px;top:537px;font-size:11px;letter-spacing:-0.172px;color:#000;font-weight:bold">Alarm</div>
<div style="left:1413px;top:541px;width:13px;height:13px;background:#fff;border:1px solid #8a8a8a;box-sizing:border-box"></div>
<div style="left:1538px;top:541px;width:13px;height:13px;background:#fff;border:1px solid #8a8a8a;box-sizing:border-box"></div>
<div style="left:1720px;top:541px;width:13px;height:13px;background:#fff;border:1px solid #8a8a8a;box-sizing:border-box"></div>
<div style="left:562px;top:563px;width:205px;height:18px;background:#fff;border:1px solid #a0a0a0;box-sizing:border-box"></div>
<div style="left:748px;top:564px;width:18px;height:16px;background:#a6a6a6"></div>
<svg style="position:absolute;left:751px;top:566px" width="12" height="10"><path d="M1 1.5 H11 L6 9.5Z" fill="#fff"/></svg>
<div style="left:771px;top:563px;width:415px;height:18px;background:#fff;border:1px solid #a0a0a0;box-sizing:border-box"></div>
<div style="left:1167px;top:564px;width:18px;height:16px;background:#a6a6a6"></div>
<svg style="position:absolute;left:1170px;top:566px" width="12" height="10"><path d="M1 1.5 H11 L6 9.5Z" fill="#fff"/></svg>
<svg style="position:absolute;left:1871px;top:534px" width="10" height="7"><path d="M1 6 L5 1.5 L9 6Z" fill="#a0a0a0"/></svg>
<div style="left:1872px;top:544px;width:8px;height:9px;background:#9ea3a6"></div>
<div style="left:1872px;top:553px;width:8px;height:317px;background:#d6dfe3"></div>
<svg style="position:absolute;left:1871px;top:873px" width="10" height="7"><path d="M1 1 L5 5.5 L9 1Z" fill="#a0a0a0"/></svg>
<div style="left:559px;top:582px;width:1308px;height:299px;overflow:hidden">
<div class="t" style="left:6.5px;top:0.00px;font-size:11px;letter-spacing:-0.089px;color:#000">Voltage</div>
<div class="t" style="left:216.5px;top:0.00px;font-size:11px;letter-spacing:-0.247px;color:#000">3-Phase Average Voltage L-N</div>
<div class="t" style="left:635px;top:0.00px;font-size:11px;color:#000">V</div>
<div style="left:807px;top:3.30px;width:13px;height:13px;background:#fff;border:1px solid #9a9a9a;box-sizing:border-box"></div>
<svg style="position:absolute;left:807px;top:3.30px" width="13" height="13"><path d="M2.3 6.6 L5.9 10.2 L10.4 2.8" fill="none" stroke="#8a9093" stroke-width="2"/></svg>
<div style="left:932px;top:3.30px;width:13px;height:13px;background:#fff;border:1px solid #9a9a9a;box-sizing:border-box"></div>
<div style="left:1085px;top:3.30px;width:13px;height:13px;background:#fff;border:1px solid #9a9a9a;box-sizing:border-box"></div>
<div style="left:1239px;top:3.30px;width:13px;height:13px;background:#fff;border:1px solid #9a9a9a;box-sizing:border-box"></div>
<div class="t" style="left:6.5px;top:19.18px;font-size:11px;letter-spacing:-0.089px;color:#000">Voltage</div>
<div class="t" style="left:216.5px;top:19.18px;font-size:11px;letter-spacing:-0.278px;color:#000">3-Phase Average Voltage L-L</div>
<div class="t" style="left:635px;top:19.18px;font-size:11px;color:#000">V</div>
<div style="left:807px;top:22.48px;width:13px;height:13px;background:#fff;border:1px solid #9a9a9a;box-sizing:border-box"></div>
<svg style="position:absolute;left:807px;top:22.48px" width="13" height="13"><path d="M2.3 6.6 L5.9 10.2 L10.4 2.8" fill="none" stroke="#8a9093" stroke-width="2"/></svg>
<div style="left:932px;top:22.48px;width:13px;height:13px;background:#fff;border:1px solid #9a9a9a;box-sizing:border-box"></div>
<div style="left:1085px;top:22.48px;width:13px;height:13px;background:#fff;border:1px solid #9a9a9a;box-sizing:border-box"></div>
<div style="left:1239px;top:22.48px;width:13px;height:13px;background:#fff;border:1px solid #9a9a9a;box-sizing:border-box"></div>
<div class="t" style="left:6.5px;top:38.36px;font-size:11px;letter-spacing:-0.089px;color:#000">Voltage</div>
<div class="t" style="left:216.5px;top:38.36px;font-size:11px;letter-spacing:-0.157px;color:#000">Imbalance Negative Sequence Unbalance Voltage</div>
<div class="t" style="left:635px;top:38.36px;font-size:11px;color:#000">%</div>
<div style="left:807px;top:41.66px;width:13px;height:13px;background:#fff;border:1px solid #9a9a9a;box-sizing:border-box"></div>
<svg style="position:absolute;left:807px;top:41.66px" width="13" height="13"><path d="M2.3 6.6 L5.9 10.2 L10.4 2.8" fill="none" stroke="#8a9093" stroke-width="2"/></svg>
<div style="left:932px;top:41.66px;width:13px;height:13px;background:#fff;border:1px solid #9a9a9a;box-sizing:border-box"></div>
<div style="left:1085px;top:41.66px;width:13px;height:13px;background:#fff;border:1px solid #9a9a9a;box-sizing:border-box"></div>
<div style="left:1239px;top:41.66px;width:13px;height:13px;background:#fff;border:1px solid #9a9a9a;box-sizing:border-box"></div>
<div class="t" style="left:6.5px;top:57.54px;font-size:11px;letter-spacing:-0.089px;color:#000">Voltage</div>
<div class="t" style="left:216.5px;top:57.54px;font-size:11px;letter-spacing:-0.180px;color:#000">Imbalance Zero Sequence Unbalance Voltage</div>
<div class="t" style="left:635px;top:57.54px;font-size:11px;color:#000">%</div>
<div style="left:807px;top:60.84px;width:13px;height:13px;background:#fff;border:1px solid #9a9a9a;box-sizing:border-box"></div>
<svg style="position:absolute;left:807px;top:60.84px" width="13" height="13"><path d="M2.3 6.6 L5.9 10.2 L10.4 2.8" fill="none" stroke="#8a9093" stroke-width="2"/></svg>
<div style="left:932px;top:60.84px;width:13px;height:13px;background:#fff;border:1px solid #9a9a9a;box-sizing:border-box"></div>
<div style="left:1085px;top:60.84px;width:13px;height:13px;background:#fff;border:1px solid #9a9a9a;box-sizing:border-box"></div>
<div style="left:1239px;top:60.84px;width:13px;height:13px;background:#fff;border:1px solid #9a9a9a;box-sizing:border-box"></div>
<div class="t" style="left:6.5px;top:76.72px;font-size:11px;letter-spacing:-0.089px;color:#000">Voltage</div>
<div class="t" style="left:216.5px;top:76.72px;font-size:11px;color:#000">Neutral Voltage</div>
<div class="t" style="left:635px;top:76.72px;font-size:11px;color:#000">V</div>
<div style="left:807px;top:80.02px;width:13px;height:13px;background:#fff;border:1px solid #9a9a9a;box-sizing:border-box"></div>
<svg style="position:absolute;left:807px;top:80.02px" width="13" height="13"><path d="M2.3 6.6 L5.9 10.2 L10.4 2.8" fill="none" stroke="#8a9093" stroke-width="2"/></svg>
<div style="left:932px;top:80.02px;width:13px;height:13px;background:#fff;border:1px solid #9a9a9a;box-sizing:border-box"></div>
<div style="left:1085px;top:80.02px;width:13px;height:13px;background:#fff;border:1px solid #9a9a9a;box-sizing:border-box"></div>
<div style="left:1239px;top:80.02px;width:13px;height:13px;background:#fff;border:1px solid #9a9a9a;box-sizing:border-box"></div>
<div class="t" style="left:6.5px;top:95.90px;font-size:11px;letter-spacing:-0.089px;color:#000">Voltage</div>
<div class="t" style="left:216.5px;top:95.90px;font-size:11px;letter-spacing:-0.182px;color:#000">Voltage a-N</div>
<div class="t" style="left:635px;top:95.90px;font-size:11px;color:#000">V</div>
<div style="left:807px;top:99.20px;width:13px;height:13px;background:#fff;border:1px solid #9a9a9a;box-sizing:border-box"></div>
<svg style="position:absolute;left:807px;top:99.20px" width="13" height="13"><path d="M2.3 6.6 L5.9 10.2 L10.4 2.8" fill="none" stroke="#8a9093" stroke-width="2"/></svg>
<div style="left:932px;top:99.20px;width:13px;height:13px;background:#fff;border:1px solid #9a9a9a;box-sizing:border-box"></div>
<div style="left:1085px;top:99.20px;width:13px;height:13px;background:#fff;border:1px solid #9a9a9a;box-sizing:border-box"></div>
<div style="left:1239px;top:99.20px;width:13px;height:13px;background:#fff;border:1px solid #9a9a9a;box-sizing:border-box"></div>
<div class="t" style="left:6.5px;top:115.08px;font-size:11px;letter-spacing:-0.089px;color:#000">Voltage</div>
<div class="t" style="left:216.5px;top:115.08px;font-size:11px;letter-spacing:-0.112px;color:#000">Voltage b-N</div>
<div class="t" style="left:635px;top:115.08px;font-size:11px;color:#000">V</div>
<div style="left:807px;top:118.38px;width:13px;height:13px;background:#fff;border:1px solid #9a9a9a;box-sizing:border-box"></div>
<svg style="position:absolute;left:807px;top:118.38px" width="13" height="13"><path d="M2.3 6.6 L5.9 10.2 L10.4 2.8" fill="none" stroke="#8a9093" stroke-width="2"/></svg>
<div style="left:932px;top:118.38px;width:13px;height:13px;background:#fff;border:1px solid #9a9a9a;box-sizing:border-box"></div>
<div style="left:1085px;top:118.38px;width:13px;height:13px;background:#fff;border:1px solid #9a9a9a;box-sizing:border-box"></div>
<div style="left:1239px;top:118.38px;width:13px;height:13px;background:#fff;border:1px solid #9a9a9a;box-sizing:border-box"></div>
<div class="t" style="left:6.5px;top:134.26px;font-size:11px;letter-spacing:-0.089px;color:#000">Voltage</div>
<div class="t" style="left:216.5px;top:134.26px;font-size:11px;letter-spacing:-0.089px;color:#000">Voltage c-N</div>
<div class="t" style="left:635px;top:134.26px;font-size:11px;color:#000">V</div>
<div style="left:807px;top:137.56px;width:13px;height:13px;background:#fff;border:1px solid #9a9a9a;box-sizing:border-box"></div>
<svg style="position:absolute;left:807px;top:137.56px" width="13" height="13"><path d="M2.3 6.6 L5.9 10.2 L10.4 2.8" fill="none" stroke="#8a9093" stroke-width="2"/></svg>
<div style="left:932px;top:137.56px;width:13px;height:13px;background:#fff;border:1px solid #9a9a9a;box-sizing:border-box"></div>
<div style="left:1085px;top:137.56px;width:13px;height:13px;background:#fff;border:1px solid #9a9a9a;box-sizing:border-box"></div>
<div style="left:1239px;top:137.56px;width:13px;height:13px;background:#fff;border:1px solid #9a9a9a;box-sizing:border-box"></div>
<div class="t" style="left:6.5px;top:153.44px;font-size:11px;letter-spacing:-0.089px;color:#000">Voltage</div>
<div class="t" style="left:216.5px;top:153.44px;font-size:11px;letter-spacing:-0.230px;color:#000">Voltage a-b</div>
<div class="t" style="left:635px;top:153.44px;font-size:11px;color:#000">V</div>
<div style="left:807px;top:156.74px;width:13px;height:13px;background:#fff;border:1px solid #9a9a9a;box-sizing:border-box"></div>
<svg style="position:absolute;left:807px;top:156.74px" width="13" height="13"><path d="M2.3 6.6 L5.9 10.2 L10.4 2.8" fill="none" stroke="#8a9093" stroke-width="2"/></svg>
<div style="left:932px;top:156.74px;width:13px;height:13px;background:#fff;border:1px solid #9a9a9a;box-sizing:border-box"></div>
<div style="left:1085px;top:156.74px;width:13px;height:13px;background:#fff;border:1px solid #9a9a9a;box-sizing:border-box"></div>
<div style="left:1239px;top:156.74px;width:13px;height:13px;background:#fff;border:1px solid #9a9a9a;box-sizing:border-box"></div>
<div class="t" style="left:6.5px;top:172.62px;font-size:11px;letter-spacing:-0.089px;color:#000">Voltage</div>
<div class="t" style="left:216.5px;top:172.62px;font-size:11px;letter-spacing:-0.168px;color:#000">Voltage b-c</div>
<div class="t" style="left:635px;top:172.62px;font-size:11px;color:#000">V</div>
<div style="left:807px;top:175.92px;width:13px;height:13px;background:#fff;border:1px solid #9a9a9a;box-sizing:border-box"></div>
<svg style="position:absolute;left:807px;top:175.92px" width="13" height="13"><path d="M2.3 6.6 L5.9 10.2 L10.4 2.8" fill="none" stroke="#8a9093" stroke-width="2"/></svg>
<div style="left:932px;top:175.92px;width:13px;height:13px;background:#fff;border:1px solid #9a9a9a;box-sizing:border-box"></div>
<div style="left:1085px;top:175.92px;width:13px;height:13px;background:#fff;border:1px solid #9a9a9a;box-sizing:border-box"></div>
<div style="left:1239px;top:175.92px;width:13px;height:13px;background:#fff;border:1px solid #9a9a9a;box-sizing:border-box"></div>
<div class="t" style="left:6.5px;top:191.80px;font-size:11px;letter-spacing:-0.089px;color:#000">Voltage</div>
<div class="t" style="left:216.5px;top:191.80px;font-size:11px;letter-spacing:-0.168px;color:#000">Voltage c-a</div>
<div class="t" style="left:635px;top:191.80px;font-size:11px;color:#000">V</div>
<div style="left:807px;top:195.10px;width:13px;height:13px;background:#fff;border:1px solid #9a9a9a;box-sizing:border-box"></div>
<svg style="position:absolute;left:807px;top:195.10px" width="13" height="13"><path d="M2.3 6.6 L5.9 10.2 L10.4 2.8" fill="none" stroke="#8a9093" stroke-width="2"/></svg>
<div style="left:932px;top:195.10px;width:13px;height:13px;background:#fff;border:1px solid #9a9a9a;box-sizing:border-box"></div>
<div style="left:1085px;top:195.10px;width:13px;height:13px;background:#fff;border:1px solid #9a9a9a;box-sizing:border-box"></div>
<div style="left:1239px;top:195.10px;width:13px;height:13px;background:#fff;border:1px solid #9a9a9a;box-sizing:border-box"></div>
<div class="t" style="left:6.5px;top:210.98px;font-size:11px;letter-spacing:-0.048px;color:#000">Current</div>
<div class="t" style="left:216.5px;top:210.98px;font-size:11px;letter-spacing:-0.227px;color:#000">3-Phase Average Current</div>
<div class="t" style="left:635px;top:210.98px;font-size:11px;color:#000">A</div>
<div style="left:807px;top:214.28px;width:13px;height:13px;background:#fff;border:1px solid #9a9a9a;box-sizing:border-box"></div>
<svg style="position:absolute;left:807px;top:214.28px" width="13" height="13"><path d="M2.3 6.6 L5.9 10.2 L10.4 2.8" fill="none" stroke="#8a9093" stroke-width="2"/></svg>
<div style="left:932px;top:214.28px;width:13px;height:13px;background:#fff;border:1px solid #9a9a9a;box-sizing:border-box"></div>
<div style="left:1085px;top:214.28px;width:13px;height:13px;background:#fff;border:1px solid #9a9a9a;box-sizing:border-box"></div>
<div style="left:1239px;top:214.28px;width:13px;height:13px;background:#fff;border:1px solid #9a9a9a;box-sizing:border-box"></div>
<div class="t" style="left:6.5px;top:230.16px;font-size:11px;letter-spacing:-0.048px;color:#000">Current</div>
<div class="t" style="left:216.5px;top:230.16px;font-size:11px;letter-spacing:-0.197px;color:#000">Current a</div>
<div class="t" style="left:635px;top:230.16px;font-size:11px;color:#000">A</div>
<div style="left:807px;top:233.46px;width:13px;height:13px;background:#fff;border:1px solid #9a9a9a;box-sizing:border-box"></div>
<svg style="position:absolute;left:807px;top:233.46px" width="13" height="13"><path d="M2.3 6.6 L5.9 10.2 L10.4 2.8" fill="none" stroke="#8a9093" stroke-width="2"/></svg>
<div style="left:932px;top:233.46px;width:13px;height:13px;background:#fff;border:1px solid #9a9a9a;box-sizing:border-box"></div>
<div style="left:1085px;top:233.46px;width:13px;height:13px;background:#fff;border:1px solid #9a9a9a;box-sizing:border-box"></div>
<div style="left:1239px;top:233.46px;width:13px;height:13px;background:#fff;border:1px solid #9a9a9a;box-sizing:border-box"></div>
<div class="t" style="left:6.5px;top:249.34px;font-size:11px;letter-spacing:-0.048px;color:#000">Current</div>
<div class="t" style="left:216.5px;top:249.34px;font-size:11px;letter-spacing:-0.109px;color:#000">Current b</div>
<div class="t" style="left:635px;top:249.34px;font-size:11px;color:#000">A</div>
<div style="left:807px;top:252.64px;width:13px;height:13px;background:#fff;border:1px solid #9a9a9a;box-sizing:border-box"></div>
<svg style="position:absolute;left:807px;top:252.64px" width="13" height="13"><path d="M2.3 6.6 L5.9 10.2 L10.4 2.8" fill="none" stroke="#8a9093" stroke-width="2"/></svg>
<div style="left:932px;top:252.64px;width:13px;height:13px;background:#fff;border:1px solid #9a9a9a;box-sizing:border-box"></div>
<div style="left:1085px;top:252.64px;width:13px;height:13px;background:#fff;border:1px solid #9a9a9a;box-sizing:border-box"></div>
<div style="left:1239px;top:252.64px;width:13px;height:13px;background:#fff;border:1px solid #9a9a9a;box-sizing:border-box"></div>
<div class="t" style="left:6.5px;top:268.52px;font-size:11px;letter-spacing:-0.048px;color:#000">Current</div>
<div class="t" style="left:216.5px;top:268.52px;font-size:11px;letter-spacing:-0.169px;color:#000">Current c</div>
<div class="t" style="left:635px;top:268.52px;font-size:11px;color:#000">A</div>
<div style="left:807px;top:271.82px;width:13px;height:13px;background:#fff;border:1px solid #9a9a9a;box-sizing:border-box"></div>
<svg style="position:absolute;left:807px;top:271.82px" width="13" height="13"><path d="M2.3 6.6 L5.9 10.2 L10.4 2.8" fill="none" stroke="#8a9093" stroke-width="2"/></svg>
<div style="left:932px;top:271.82px;width:13px;height:13px;background:#fff;border:1px solid #9a9a9a;box-sizing:border-box"></div>
<div style="left:1085px;top:271.82px;width:13px;height:13px;background:#fff;border:1px solid #9a9a9a;box-sizing:border-box"></div>
<div style="left:1239px;top:271.82px;width:13px;height:13px;background:#fff;border:1px solid #9a9a9a;box-sizing:border-box"></div>
<div class="t" style="left:6.5px;top:287.70px;font-size:11px;letter-spacing:-0.048px;color:#000">Current</div>
<div class="t" style="left:216.5px;top:287.70px;font-size:11px;letter-spacing:-0.159px;color:#000">Imbalance Negative Sequence Unbalance Current</div>
<div class="t" style="left:635px;top:287.70px;font-size:11px;color:#000">%</div>
<div style="left:807px;top:291.00px;width:13px;height:13px;background:#fff;border:1px solid #9a9a9a;box-sizing:border-box"></div>
<svg style="position:absolute;left:807px;top:291.00px" width="13" height="13"><path d="M2.3 6.6 L5.9 10.2 L10.4 2.8" fill="none" stroke="#8a9093" stroke-width="2"/></svg>
<div style="left:932px;top:291.00px;width:13px;height:13px;background:#fff;border:1px solid #9a9a9a;box-sizing:border-box"></div>
<div style="left:1085px;top:291.00px;width:13px;height:13px;background:#fff;border:1px solid #9a9a9a;box-sizing:border-box"></div>
<div style="left:1239px;top:291.00px;width:13px;height:13px;background:#fff;border:1px solid #9a9a9a;box-sizing:border-box"></div>
</div>
<div style="left:1218px;top:890px;width:4px;height:4px;background:#c4c4c4"></div>
<div style="left:558px;top:902px;width:1323px;height:21px;background:#777b7e"></div>
<svg style="position:absolute;left:565px;top:907.5px" width="9" height="10"><path d="M0.5 0.5 V9 L7.5 4.75Z" fill="#fff"/></svg>
<div class="t" style="left:582px;top:902px;font-size:11px;letter-spacing:0.042px;color:#f2f2f2">Alarm Configuration</div>
<div style="left:549px;top:936px;width:1341px;height:21px;background:#777b7e"></div>
<svg style="position:absolute;left:556px;top:941.5px" width="9" height="10"><path d="M0.5 0.5 V9 L7.5 4.75Z" fill="#fff"/></svg>
<div class="t" style="left:573px;top:936px;font-size:11px;letter-spacing:-0.269px;color:#f2f2f2">Favorites</div>
<div style="left:549px;top:961px;width:1341px;height:15px;overflow:hidden">
<div style="left:0;top:0;width:1341px;height:20px;background:#777b7e"></div>
<svg style="position:absolute;left:7px;top:5px" width="9" height="10"><path d="M0.5 0.5 V9 L7.5 4.75Z" fill="#fff"/></svg>
<div class="t" style="left:24px;top:0px;font-size:11px;letter-spacing:-0.361px;color:#f2f2f2">Trend</div>
</div>
<div style="left:1181px;top:978px;width:41px;height:8px;background:#f0efef"></div>
</body></html>
